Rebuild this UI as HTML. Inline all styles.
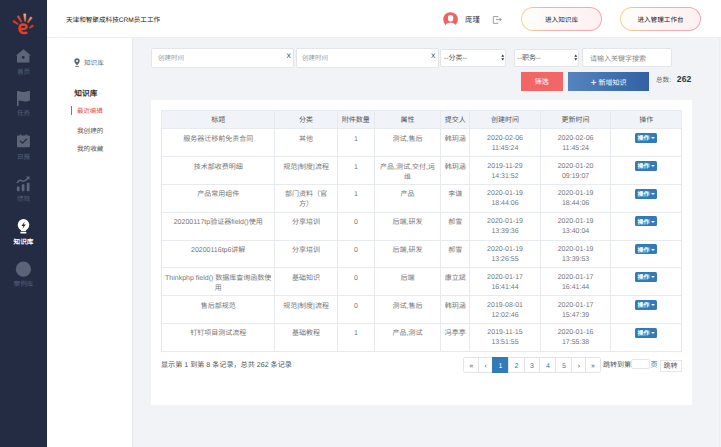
<!DOCTYPE html>
<html lang="zh-CN">
<head>
<meta charset="utf-8">
<style>
*{box-sizing:border-box;margin:0;padding:0}
html,body{width:721px;height:447px;overflow:hidden;background:#f2f3f6;font-family:"Liberation Sans",sans-serif;color:#333;text-rendering:geometricPrecision}
.abs{position:absolute}
#side{left:0;top:0;width:47px;height:447px;background:#232c43}
.nav{position:absolute;left:0;width:47px;text-align:center;font-size:6.6px;line-height:7px;color:#566075;white-space:nowrap}
.nav.on{color:#fff;font-weight:bold}
#hdr{left:47px;top:0;width:674px;height:38px;background:#fff;border-bottom:1px solid #eeeff1}
#title{left:66px;top:15.5px;font-size:6.6px;line-height:9px;color:#222;white-space:nowrap}
#sub{left:47px;top:38px;width:86px;height:409px;background:#fff;border-right:1px solid #e6e7ea}
.sb{position:absolute;white-space:nowrap;font-size:6.6px;line-height:8px;color:#555}
.inp{position:absolute;background:#fff;border:1px solid #e3e5e9;border-radius:2px}
.ph{position:absolute;font-size:6.5px;line-height:8px;color:#9a9a9a;white-space:nowrap}
.xx{position:absolute;font-size:6.6px;line-height:8px;color:#333;font-weight:normal}
.btn{position:absolute;color:#fff;font-size:7px;line-height:8px;text-align:center}
#panel{left:151px;top:100px;width:541px;height:305px;background:#fff}
table{position:absolute;left:161px;top:110px;border-collapse:collapse;table-layout:fixed;width:520.4px}
td,th{border:1px solid #e7eaee;font-size:7px;line-height:10px;color:#777;text-align:center;vertical-align:top;font-weight:normal;padding:5.4px 2px 0 2px;overflow:hidden}
th{background:#f0f4f9;height:18.4px;vertical-align:middle;padding:2px 0 0 0;color:#555}
td{height:27.82px}
td.dt{padding-top:4.4px}
.op{display:inline-block;background:#337ab7;color:#fff;border-radius:1.5px;width:22px;height:10px;line-height:10px;font-size:6px;font-weight:bold;vertical-align:top;margin-top:-1.8px;padding-top:1.3px}
.pg{position:relative;flex:none;height:14.4px;border-left:1px solid #e2e4e8;font-size:7px;line-height:14.4px;padding-top:2px;text-align:center;color:#337ab7}
.pg.on{background:#337ab7;color:#fff;border-left-color:#337ab7;margin-top:-1px;height:16.4px;padding-top:3px}

.hb{border-radius:12px;background:linear-gradient(80deg,#f1d894 0%,#f5b0a8 35%,#f4a4b6 100%);padding:0.8px}
.hb span{display:block;width:100%;height:100%;border-radius:12px;background:linear-gradient(90deg,#fffdf9,#fdf0f1);font-size:6.6px;line-height:22.4px;padding-top:2.2px;text-align:center;color:#222;white-space:nowrap}
.car{display:inline-block;width:0;height:0;border-left:2px solid transparent;border-right:2px solid transparent;border-top:2px solid #fff;vertical-align:1px}
</style>
</head>
<body>
<!-- dark sidebar -->
<div id="side" class="abs">
  <svg class="abs" style="left:0;top:0" width="47" height="300" viewBox="0 0 47 300">
    <defs>
<linearGradient id="g3" x1="0" y1="13.8" x2="0" y2="21.4" gradientUnits="userSpaceOnUse"><stop offset="0" stop-color="#f7b08a"/><stop offset="1" stop-color="#e8552f"/></linearGradient>
<linearGradient id="g4" x1="31.4" y1="17.4" x2="27.6" y2="22.6" gradientUnits="userSpaceOnUse"><stop offset="0" stop-color="#f49a70"/><stop offset="1" stop-color="#e5472b"/></linearGradient>
</defs>
<!-- logo -->
<polygon points="12.75,21.84 17.87,24.70 18.53,23.70 13.85,20.16" fill="#e23e27" stroke="#e23e27" stroke-width="0.4" stroke-linejoin="round"/>
<polygon points="16.99,16.53 20.88,22.30 21.92,21.70 18.81,15.47" fill="#e5432a" stroke="#e5432a" stroke-width="0.4" stroke-linejoin="round"/>
<polygon points="23.55,13.88 24.55,21.44 25.85,21.36 25.85,13.72" fill="url(#g3)" stroke="url(#g3)" stroke-width="0.4" stroke-linejoin="round"/>
<polygon points="30.51,16.75 27.12,22.25 28.08,22.95 32.29,18.05" fill="url(#g4)" stroke="url(#g4)" stroke-width="0.4" stroke-linejoin="round"/>
<polygon points="32.52,24.84 29.13,27.48 29.67,28.32 33.48,26.36" fill="#e5432a" stroke="#e5432a" stroke-width="0.4" stroke-linejoin="round"/>
<path d="M21.6 29 C23.5 29.2 25.6 28.8 26.4 27.6 C27.1 26.3 26.2 24.7 23.4 24.6 C20.6 24.6 19.5 26.6 19.5 28.6 C19.5 31 21.3 32.8 23.4 32.9 C24.4 33 25.2 33 26.4 32.7" stroke="#e63f26" stroke-width="2.5" fill="none" stroke-linecap="round"/>
    <!-- home -->
    <path d="M23.6 49.2 L30.8 55.4 L29.4 55.4 L29.4 62.6 L17 62.6 L17 55.4 L16 55.4 Z" fill="#5d6679"/>
    <circle cx="23.2" cy="57.4" r="1.4" fill="#232c43"/>
    <!-- flag -->
    <rect x="17" y="91" width="1.6" height="15" fill="#5d6679"/>
    <path d="M17 91.6 C20 90.4 22.5 92.6 25 92 C27 91.6 28.5 91 29.9 90.8 L29.9 100.6 C28 101.2 26.8 101.6 25 101.6 C22.5 101.6 20 99.8 17 101 Z" fill="#5d6679"/>
    <!-- calendar -->
    <rect x="17" y="135.6" width="12.9" height="11.6" rx="1" fill="#5d6679"/>
    <rect x="19.8" y="134.4" width="1.5" height="2.4" fill="#5d6679"/>
    <rect x="25.6" y="134.4" width="1.5" height="2.4" fill="#5d6679"/>
    <path d="M20 140.8 L22.6 143.2 L27 138.6" stroke="#232c43" stroke-width="1.3" fill="none"/>
    <!-- chart -->
    <rect x="16.9" y="186.4" width="2.6" height="4.8" rx="0.7" fill="#5d6679"/>
    <rect x="21.8" y="184.2" width="2.6" height="7" rx="0.7" fill="#5d6679"/>
    <rect x="26.8" y="182.8" width="2.7" height="8.4" rx="0.7" fill="#5d6679"/>
    <path d="M17.4 182.4 C19 180.2 20.4 179.8 22 180.8 C23.6 181.8 25 181.4 28.4 177.8" stroke="#5d6679" stroke-width="1.5" fill="none" stroke-linecap="round"/>
    <path d="M26 176.6 L29.6 176.4 L29.4 180 Z" fill="#5d6679"/>
    <!-- bulb -->
    <circle cx="23.5" cy="224.8" r="5.8" fill="#fff"/><path d="M20.6 229 L26.4 229 L25.8 231 L21.2 231 Z" fill="#fff"/>
    <rect x="20.4" y="231.7" width="6" height="1.9" rx="0.5" fill="#fff"/>
    <path d="M24.7 221.6 L21.5 225.9 L23.4 225.9 L22.3 228.9 L25.8 224.4 L23.8 224.4 Z" fill="#232c43"/>
    <!-- circle -->
    <circle cx="23.4" cy="269.2" r="7.6" fill="#5a6377"/>
  </svg>
  <div class="nav" style="top:68.6px">首页</div>
  <div class="nav" style="top:110px">任务</div>
  <div class="nav" style="top:153.8px">日报</div>
  <div class="nav" style="top:196px">绩效</div>
  <div class="nav on" style="top:239px">知识库</div>
  <div class="nav" style="top:281px">案例库</div>
</div>

<!-- header -->
<div id="hdr" class="abs"></div>
<div id="title" class="abs">天津和智聚成科技CRM员工工作</div>

<!-- second sidebar -->
<div id="sub" class="abs"></div>

<div class="abs" style="left:719px;top:38px;width:1px;height:409px;background:#ebecef"></div>
<!-- panel -->
<div id="panel" class="abs"></div>


<!-- header right -->
<svg class="abs" style="left:443px;top:11.8px" width="16" height="16" viewBox="0 0 16 16">
  <circle cx="7.55" cy="7.5" r="7.35" fill="#ef6262"/>
  <path d="M5 5.2 C5 3.6 5.6 3.2 7.6 3.2 C9.6 3.2 10.2 3.6 10.2 5.2 L10.2 7 C10.2 8.8 9.2 9.5 7.6 9.5 C6 9.5 5 8.8 5 7 Z" fill="#fff"/>
  <ellipse cx="7.55" cy="15.9" rx="6" ry="5.5" fill="#fff"/>
</svg>
<div class="abs" style="left:465px;top:15px;font-size:7.4px;line-height:9px;color:#333;white-space:nowrap">庞瑾</div>
<svg class="abs" style="left:492px;top:15px" width="11" height="10" viewBox="0 0 11 10">
  <path d="M6 2.3 L6 1.6 L1.3 1.6 L1.3 8.3 L6 8.3 L6 7.6" stroke="#9095a0" stroke-width="0.9" fill="none"/>
  <path d="M4 4.6 L9.2 4.6 M7.6 3 L9.2 4.6 L7.6 6.2" stroke="#9095a0" stroke-width="0.9" fill="none"/>
</svg>
<div class="abs hb" style="left:521px;top:7px;width:81px;height:24px"><span>进入知识库</span></div>
<div class="abs hb" style="left:620px;top:7px;width:81px;height:24px"><span>进入管理工作台</span></div>

<!-- sub sidebar content -->
<svg class="abs" style="left:74px;top:58px" width="6" height="9" viewBox="0 0 6 9">
  <path d="M3 0.3 C1.3 0.3 0.3 1.5 0.3 2.9 C0.3 4.6 2.2 6 3 7.6 C3.8 6 5.7 4.6 5.7 2.9 C5.7 1.5 4.7 0.3 3 0.3 Z" fill="#5f6570"/>
  <circle cx="3" cy="2.9" r="1" fill="#fff"/>
  <rect x="1.2" y="8" width="3.6" height="0.8" fill="#5f6570"/>
</svg>
<div class="sb" style="left:84px;top:60px;color:#666">知识库</div>
<div class="sb" style="left:74.3px;top:89.5px;font-size:7.7px;color:#333;font-weight:bold">知识库</div>
<div class="abs" style="left:70.5px;top:106px;width:1.2px;height:9px;background:#e0504a"></div>
<div class="sb" style="left:77px;top:108px;color:#e0504a;font-size:6.4px">最近编辑</div>
<div class="sb" style="left:77px;top:127.5px">我创建的</div>
<div class="sb" style="left:77px;top:146.3px">我的收藏</div>

<!-- filters -->
<div class="inp" style="left:151px;top:48px;width:143px;height:19.5px"></div>
<div class="ph" style="left:158px;top:55px">创建时间</div>
<div class="xx" style="left:286.5px;top:53px">X</div>
<div class="inp" style="left:295.5px;top:48px;width:143px;height:19.5px"></div>
<div class="ph" style="left:302px;top:55px">创建时间</div>
<div class="xx" style="left:431px;top:53px">X</div>
<div class="inp" style="left:440px;top:48.5px;width:65.5px;height:18px"></div>
<div class="ph" style="left:443.8px;top:55px;color:#555;font-size:7px">--分类--</div>
<svg class="abs" style="left:500.8px;top:54px" width="4" height="7" viewBox="0 0 4 7"><path d="M0.3 2.8 L1.75 0.6 L3.2 2.8 Z M0.3 4.2 L1.75 6.4 L3.2 4.2 Z" fill="#333"/></svg>
<div class="inp" style="left:513.5px;top:48.5px;width:65.5px;height:18px"></div>
<div class="ph" style="left:517.3px;top:55px;color:#555;font-size:7px">--职务--</div>
<svg class="abs" style="left:574.2px;top:54px" width="4" height="7" viewBox="0 0 4 7"><path d="M0.3 2.8 L1.75 0.6 L3.2 2.8 Z M0.3 4.2 L1.75 6.4 L3.2 4.2 Z" fill="#333"/></svg>
<div class="inp" style="left:581.5px;top:48px;width:90px;height:18.5px"></div>
<div class="ph" style="left:590px;top:55.5px;color:#888;font-size:7px">请输入关键字搜索</div>

<div class="btn" style="left:520.5px;top:72px;width:42.5px;height:18.5px;background:#f26666;line-height:18.5px;padding-top:2.3px">筛选</div>
<div class="btn" style="left:568px;top:72px;width:81px;height:18.5px;background:linear-gradient(90deg,#5584be,#3261a4);line-height:18.5px;padding-top:2.3px"><span style="font-size:10.5px;font-weight:normal;vertical-align:-0.8px;display:inline-block;transform:scaleY(1.05)">+</span> 新增知识</div>
<div class="abs" style="left:656px;top:74.7px;font-size:6.6px;line-height:8px;color:#666;white-space:nowrap">总数: <b style="color:#333;font-size:8.6px;margin-left:4px">262</b></div>

<!-- table -->
<table>
<colgroup><col style="width:113.4px"><col style="width:62.4px"><col style="width:37.1px"><col style="width:66.3px"><col style="width:29.1px"><col style="width:70.5px"><col style="width:70.6px"><col style="width:71px"></colgroup>
<tr><th>标题</th><th>分类</th><th>附件数量</th><th>属性</th><th>提交人</th><th>创建时间</th><th>更新时间</th><th>操作</th></tr>
<tr><td>服务器迁移前免责合同</td><td>其他</td><td>1</td><td>测试,售后</td><td>韩玥涵</td><td class="dt">2020-02-06<br>11:45:24</td><td class="dt">2020-02-06<br>11:45:24</td><td><span class="op">操作 <i class="car"></i></span></td></tr>
<tr><td>技术部收费明细</td><td>规范|制度|流程</td><td>1</td><td>产品,测试,交付,运<br>维</td><td>韩玥涵</td><td class="dt">2019-11-29<br>14:31:52</td><td class="dt">2020-01-20<br>09:19:07</td><td><span class="op">操作 <i class="car"></i></span></td></tr>
<tr><td>产品常用组件</td><td>部门资料（官<br>方）</td><td>1</td><td>产品</td><td>李谦</td><td class="dt">2020-01-19<br>18:44:06</td><td class="dt">2020-01-19<br>18:44:06</td><td><span class="op">操作 <i class="car"></i></span></td></tr>
<tr><td>20200117tp验证器field()使用</td><td>分享培训</td><td>0</td><td>后端,研发</td><td>郝雪</td><td class="dt">2020-01-19<br>13:39:36</td><td class="dt">2020-01-19<br>13:40:04</td><td><span class="op">操作 <i class="car"></i></span></td></tr>
<tr><td>20200116tp6讲解</td><td>分享培训</td><td>0</td><td>后端,研发</td><td>郝雪</td><td class="dt">2020-01-19<br>13:26:55</td><td class="dt">2020-01-19<br>13:39:53</td><td><span class="op">操作 <i class="car"></i></span></td></tr>
<tr><td>Thinkphp field() 数据库查询函数使<br>用</td><td>基础知识</td><td>0</td><td>后端</td><td>康立斌</td><td class="dt">2020-01-17<br>16:41:44</td><td class="dt">2020-01-17<br>16:41:44</td><td><span class="op">操作 <i class="car"></i></span></td></tr>
<tr><td>售后部规范</td><td>规范|制度|流程</td><td>0</td><td>测试,售后</td><td>韩玥涵</td><td class="dt">2019-08-01<br>12:02:46</td><td class="dt">2020-01-17<br>15:47:39</td><td><span class="op">操作 <i class="car"></i></span></td></tr>
<tr><td>钉钉项目测试流程</td><td>基础教程</td><td>1</td><td>产品,测试</td><td>冯亭亭</td><td class="dt">2019-11-15<br>13:51:55</td><td class="dt">2020-01-16<br>17:55:38</td><td><span class="op">操作 <i class="car"></i></span></td></tr>
</table>

<div class="abs" style="left:161px;top:360.5px;font-size:7.1px;line-height:9px;color:#555;white-space:nowrap">显示第 1 到第 8 条记录，总共 262 条记录</div>

<!-- pagination -->
<div class="abs" style="left:463.3px;top:357px;width:137.3px;height:16.4px;border:1px solid #e2e4e8;border-radius:2.5px;background:#fff;display:flex;overflow:visible">
<div class="pg" style="width:14.2px;border-left:none;color:#555">«</div>
<div class="pg" style="width:13.5px;color:#555">‹</div>
<div class="pg on" style="width:16px">1</div>
<div class="pg" style="width:15.7px">2</div>
<div class="pg" style="width:15.6px">3</div>
<div class="pg" style="width:16.2px">4</div>
<div class="pg" style="width:16px">5</div>
<div class="pg" style="width:13.9px;color:#555">›</div>
<div class="pg" style="width:14.2px;color:#555">»</div>
</div>
<div class="abs" style="left:603px;top:360.5px;font-size:7px;line-height:9px;color:#555;white-space:nowrap">跳转到第</div>
<div class="abs" style="left:631px;top:359px;width:19px;height:10px;border:1px solid #e6e6e6;border-radius:2px;background:#fff"></div>
<div class="abs" style="left:650.5px;top:360.5px;font-size:7px;line-height:9px;color:#555">页</div>
<div class="abs" style="left:659.5px;top:359.5px;width:22px;height:12px;border:1px solid #e6e6e6;background:#fff;font-size:7px;line-height:11px;text-align:center;color:#555">跳转</div>

</body>
</html>
